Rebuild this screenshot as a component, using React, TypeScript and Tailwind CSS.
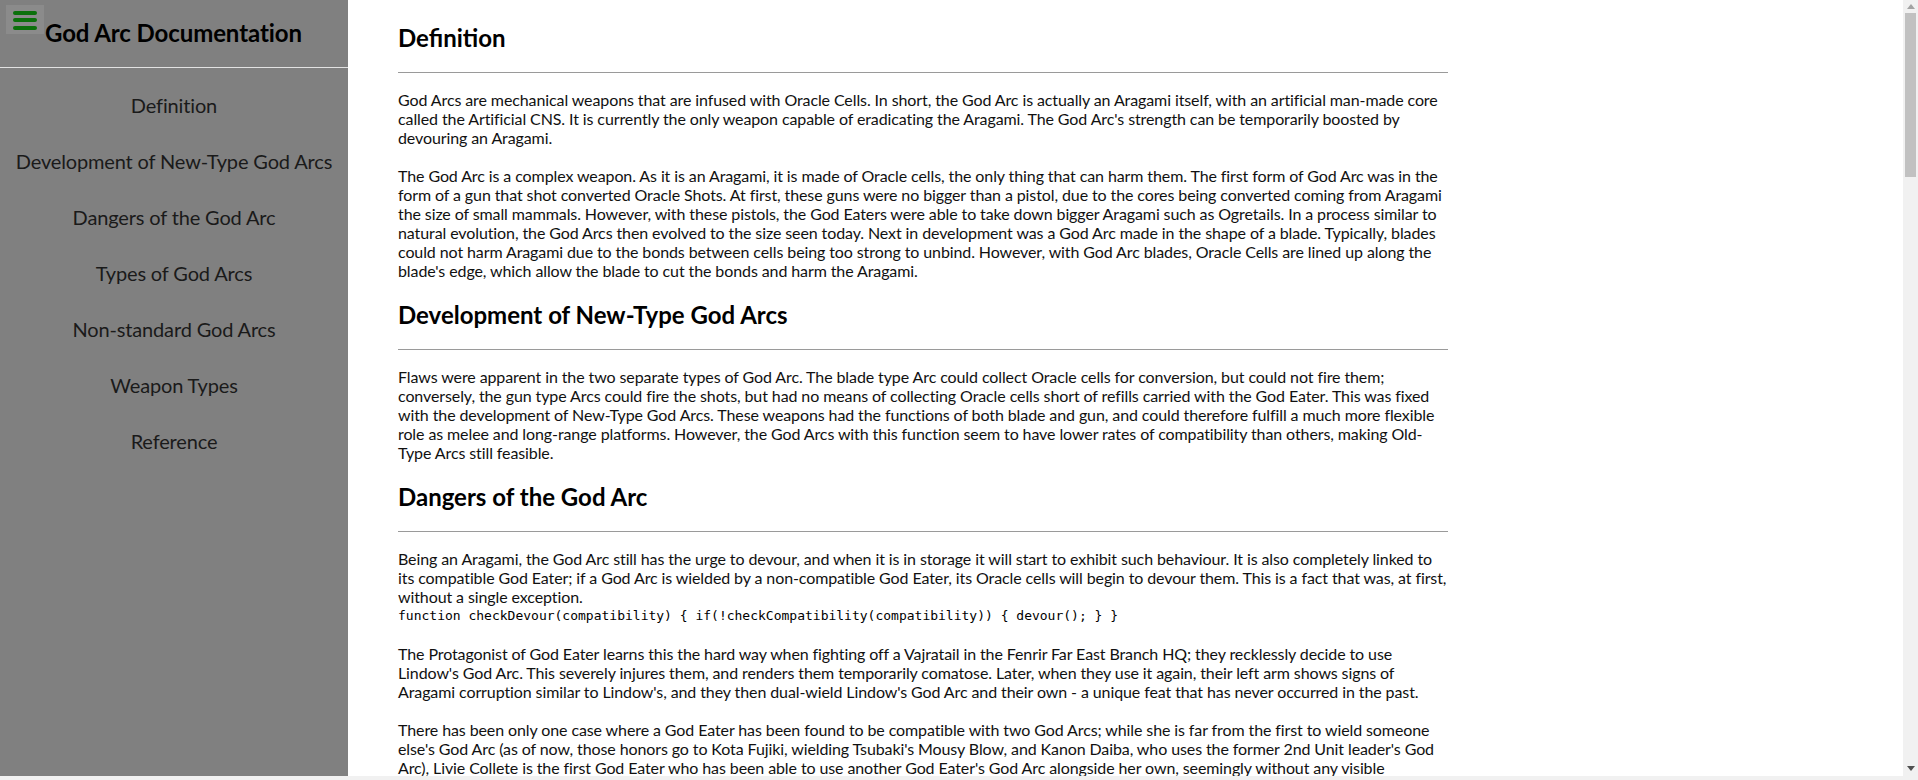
import React from "react";

const navItems = [
  "Definition",
  "Development of New-Type God Arcs",
  "Dangers of the God Arc",
  "Types of God Arcs",
  "Non-standard God Arcs",
  "Weapon Types",
  "Reference",
];

function Section({ title, children, first }: { title: string; children: React.ReactNode; first?: boolean }) {
  return (
    <section className={first ? "" : "mt-[20px]"}>
      <h2 className="text-[24px] font-bold leading-[29px] text-black mb-[20px]">{title}</h2>
      <div className="h-px bg-[#9a9a9a] mb-[17px]" />
      <div className="flex flex-col gap-[19px]">{children}</div>
    </section>
  );
}

function Lines({ lines }: { lines: string[] }) {
  return (
    <>
      {lines.map((l, i) => (
        <span key={i} className="block whitespace-nowrap">
          {l}
        </span>
      ))}
    </>
  );
}

function P({ lines }: { lines: string[] }) {
  return (
    <p className="text-[16px] leading-[19px] text-[#111] tracking-[-0.1px]">
      <Lines lines={lines} />
    </p>
  );
}

function Scrollbar() {
  return (
    <div className="w-[15px] shrink-0 bg-[#f1f1f1] flex flex-col items-center">
      <div className="h-[13px] w-full flex items-center justify-center">
        <svg width="8" height="5" viewBox="0 0 8 5">
          <polygon points="0,5 8,5 4,0" fill="#a3a3a3" />
        </svg>
      </div>
      <div className="w-[11px] h-[164px] bg-[#c1c1c1]" />
      <div className="flex-1" />
      <div className="h-[15px] w-full flex items-center justify-center">
        <svg width="8" height="5" viewBox="0 0 8 5">
          <polygon points="0,0 8,0 4,5" fill="#505050" />
        </svg>
      </div>
    </div>
  );
}

export default function App() {
  return (
    <div className="h-[780px] w-[1918px] flex flex-col overflow-hidden font-['Lato',sans-serif] [font-kerning:normal]">
      <div className="flex h-[776px]">
        <aside className="w-[348px] shrink-0 bg-[#808080] flex flex-col">
          <div className="h-[68px] border-b border-[#e2e2e2] flex items-start">
            <button className="ml-[6px] mt-[5px] w-[38px] h-[29px] bg-[#8b8b8b] shrink-0">
              <svg width="38" height="29" viewBox="0 0 38 29">
                <rect x="7" y="6" width="24" height="4" rx="2" fill="#0b700b" />
                <rect x="7" y="13" width="24" height="4" rx="2" fill="#0b700b" />
                <rect x="7" y="21" width="24" height="4" rx="2" fill="#0b700b" />
              </svg>
            </button>
            <h1 className="mt-[18px] ml-[1px] text-[24px] font-bold leading-[29px] text-black tracking-[-0.1px]">
              God Arc Documentation
            </h1>
          </div>
          <nav className="pt-[9px] flex flex-col">
            {navItems.map((n) => (
              <a key={n} className="py-[16px] text-center text-[20px] leading-[24px] text-[#1a1a1a] tracking-[-0.15px]">
                {n}
              </a>
            ))}
          </nav>
        </aside>
        <main className="flex-1 overflow-hidden bg-white">
          <div className="ml-[50px] w-[1050px] pt-[23px] pb-[40px]">
            <Section title="Definition" first>
              <P
                lines={[
                  "God Arcs are mechanical weapons that are infused with Oracle Cells. In short, the God Arc is actually an Aragami itself, with an artificial man-made core",
                  "called the Artificial CNS. It is currently the only weapon capable of eradicating the Aragami. The God Arc's strength can be temporarily boosted by",
                  "devouring an Aragami.",
                ]}
              />
              <P
                lines={[
                  "The God Arc is a complex weapon. As it is an Aragami, it is made of Oracle cells, the only thing that can harm them. The first form of God Arc was in the",
                  "form of a gun that shot converted Oracle Shots. At first, these guns were no bigger than a pistol, due to the cores being converted coming from Aragami",
                  "the size of small mammals. However, with these pistols, the God Eaters were able to take down bigger Aragami such as Ogretails. In a process similar to",
                  "natural evolution, the God Arcs then evolved to the size seen today. Next in development was a God Arc made in the shape of a blade. Typically, blades",
                  "could not harm Aragami due to the bonds between cells being too strong to unbind. However, with God Arc blades, Oracle Cells are lined up along the",
                  "blade's edge, which allow the blade to cut the bonds and harm the Aragami.",
                ]}
              />
            </Section>
            <Section title="Development of New-Type God Arcs">
              <P
                lines={[
                  "Flaws were apparent in the two separate types of God Arc. The blade type Arc could collect Oracle cells for conversion, but could not fire them;",
                  "conversely, the gun type Arcs could fire the shots, but had no means of collecting Oracle cells short of refills carried with the God Eater. This was fixed",
                  "with the development of New-Type God Arcs. These weapons had the functions of both blade and gun, and could therefore fulfill a much more flexible",
                  "role as melee and long-range platforms. However, the God Arcs with this function seem to have lower rates of compatibility than others, making Old-",
                  "Type Arcs still feasible.",
                ]}
              />
            </Section>
            <Section title="Dangers of the God Arc">
              <div className="text-[16px] leading-[19px] text-[#111]">
                <p className="tracking-[-0.1px]">
                  <Lines
                    lines={[
                      "Being an Aragami, the God Arc still has the urge to devour, and when it is in storage it will start to exhibit such behaviour. It is also completely linked to",
                      "its compatible God Eater; if a God Arc is wielded by a non-compatible God Eater, its Oracle cells will begin to devour them. This is a fact that was, at first,",
                      "without a single exception.",
                    ]}
                  />
                </p>
                <code className="block whitespace-nowrap font-['DejaVu_Sans_Mono',monospace] text-[13px] leading-[19px] text-black">
                  {"function checkDevour(compatibility) { if(!checkCompatibility(compatibility)) { devour(); } }"}
                </code>
              </div>
              <P
                lines={[
                  "The Protagonist of God Eater learns this the hard way when fighting off a Vajratail in the Fenrir Far East Branch HQ; they recklessly decide to use",
                  "Lindow's God Arc. This severely injures them, and renders them temporarily comatose. Later, when they use it again, their left arm shows signs of",
                  "Aragami corruption similar to Lindow's, and they then dual-wield Lindow's God Arc and their own - a unique feat that has never occurred in the past.",
                ]}
              />
              <P
                lines={[
                  "There has been only one case where a God Eater has been found to be compatible with two God Arcs; while she is far from the first to wield someone",
                  "else's God Arc (as of now, those honors go to Kota Fujiki, wielding Tsubaki's Mousy Blow, and Kanon Daiba, who uses the former 2nd Unit leader's God",
                  "Arc), Livie Collete is the first God Eater who has been able to use another God Eater's God Arc alongside her own, seemingly without any visible",
                  "side effects.",
                ]}
              />
            </Section>
          </div>
        </main>
        <Scrollbar />
      </div>
      <div className="h-[4px] bg-[#f1f1f1]" />
    </div>
  );
}
